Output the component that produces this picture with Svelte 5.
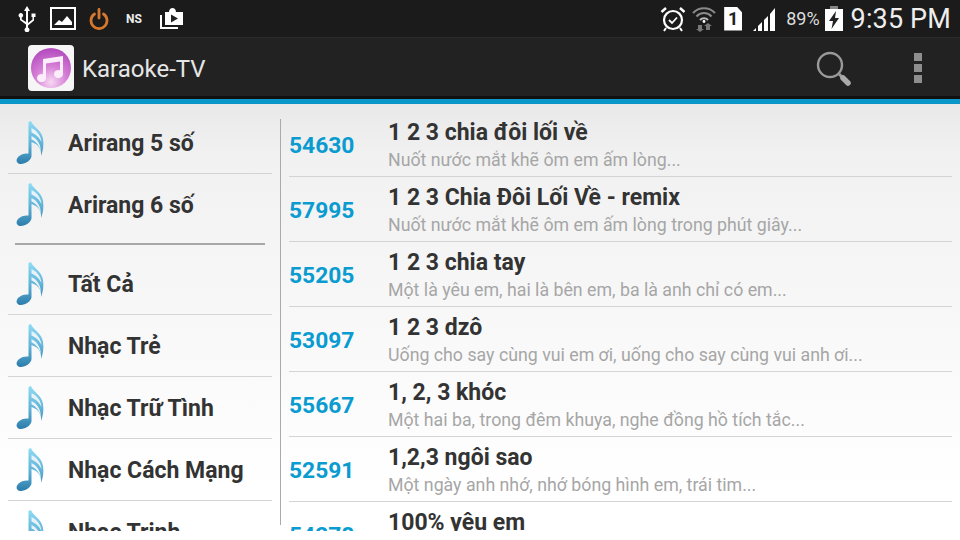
<script>
	const top = ['Arirang 5 số', 'Arirang 6 số'];
	const genres = ['Tất Cả', 'Nhạc Trẻ', 'Nhạc Trữ Tình', 'Nhạc Cách Mạng', 'Nhạc Trịnh'];
	const songs = [
		{ id: '54630', title: '1 2 3 chia đôi lối về', lyric: 'Nuốt nước mắt khẽ ôm em ấm lòng...' },
		{ id: '57995', title: '1 2 3 Chia Đôi Lối Về - remix', lyric: 'Nuốt nước mắt khẽ ôm em ấm lòng trong phút giây...' },
		{ id: '55205', title: '1 2 3 chia tay', lyric: 'Một là yêu em, hai là bên em, ba là anh chỉ có em...' },
		{ id: '53097', title: '1 2 3 dzô', lyric: 'Uống cho say cùng vui em ơi, uống cho say cùng vui anh ơi...' },
		{ id: '55667', title: '1, 2, 3 khóc', lyric: 'Một hai ba, trong đêm khuya, nghe đồng hồ tích tắc...' },
		{ id: '52591', title: '1,2,3 ngôi sao', lyric: 'Một ngày anh nhớ, nhớ bóng hình em, trái tim...' },
		{ id: '54278', title: '100% yêu em', lyric: '' }
	];
</script>

{#snippet note()}
	<svg class="note" viewBox="0 0 32 48" width="32" height="48">
		<path d="M14.500 3 L17 2 C19 8 28 11 29 20 C30 26 29 32 27 37 C27.500 31 26 26 17.500 23 L17.500 37 C17.500 41 11 45.500 6 45 C2.500 44.500 1.500 41 4 38 C7 35 11 34 14.500 34.500 Z" fill="url(#noteFill)" />
		<path d="M17.500 9 C22 11 27 16 27.500 23 C25 18 22 15.500 17.500 13.500 Z M17.500 17 C22 19 26.500 24 27 32 C25 26 22 22.500 17.500 20.500 Z" fill="#e9f3f7" />
	</svg>
{/snippet}

{#snippet genre(name)}
	<div class="genre">
		{@render note()}
		<span>{name}</span>
	</div>
{/snippet}

<svg class="defs" width="0" height="0">
	<defs>
		<linearGradient id="noteFill" x1="0" y1="0" x2="0" y2="1">
			<stop offset="0" stop-color="#8fdcf5" />
			<stop offset="0.55" stop-color="#5fb0d6" />
			<stop offset="1" stop-color="#2c7cab" />
		</linearGradient>
		<radialGradient id="appFill" cx="0.5" cy="0.85" r="0.8">
			<stop offset="0" stop-color="#f6d8f2" />
			<stop offset="0.5" stop-color="#d67fd6" />
			<stop offset="1" stop-color="#b54fc0" />
		</radialGradient>
	</defs>
</svg>

<div class="screen">
	<header class="status">
		<div class="status-left">
			<svg width="20" height="26" viewBox="0 0 20 26" fill="#fff">
				<path d="M10 0 L13 5 H11 V17 L15.500 13.500 V11 H14.500 V7.500 H18.500 V11 H17 V14.500 L11 19.500 V21.500 A2.500 2.500 0 1 1 9 21.500 V18.500 L3 14 V11.500 A2.300 2.300 0 1 1 4.700 11.500 V13.200 L9 16 V5 H7 Z" />
			</svg>
			<svg width="26" height="23" viewBox="0 0 26 23">
				<rect x="1" y="1" width="24" height="21" fill="none" stroke="#fff" stroke-width="2" />
				<path d="M4 18 L9 13 L12 15 L17 9 L22 15 V18 Z" fill="#fff" />
			</svg>
			<svg width="20" height="22" viewBox="0 0 20 22" fill="none" stroke="#d5782c" stroke-width="2.800">
				<path d="M5.500 6 A8 8 0 1 0 14.500 6" stroke-linecap="round" />
				<path d="M10 1.500 V10" stroke-linecap="round" />
			</svg>
			<span class="ns">NS</span>
			<svg width="24" height="24" viewBox="0 0 24 24">
				<path d="M1 8 V21 H18" fill="none" stroke="#fff" stroke-width="2" />
				<path d="M5 5 H9 C9 -0.500 16 -0.500 16 5 H23 V18 H5 Z" fill="#fff" />
				<path d="M11 7.500 L18 11.500 L11 15.500 Z" fill="#222" />
			</svg>
		</div>
		<div class="status-right">
			<svg width="26" height="26" viewBox="0 0 26 26" fill="none" stroke="#fff">
				<circle cx="13" cy="14" r="9" stroke-width="2.200" />
				<path d="M9 14 L12 17 L17 11.500" stroke-width="1.800" />
				<path d="M1.500 6 L6 2 M24.500 6 L20 2" stroke-width="2.400" />
				<path d="M6 22 L4 25 M20 22 L22 25" stroke-width="2" />
			</svg>
			<svg width="24" height="26" viewBox="0 0 24 26" fill="none" stroke="#8a8a8a" stroke-width="2">
				<path d="M1 7 A15 15 0 0 1 23 7 M4.500 10.500 A10 10 0 0 1 19.500 10.500" />
				<path d="M8 14 A5.500 5.500 0 0 1 16 14" stroke="#bbb" />
				<circle cx="12" cy="15.500" r="1.400" fill="#fff" stroke="none" />
				<path d="M6 19 H10 V23 H12 L8 26 L4 23 H6 Z M14 24 H18 V20 H20 L16 17 L12 20 H14 Z" fill="#777" stroke="none" />
			</svg>
			<div class="sim">1</div>
			<svg width="24" height="26" viewBox="0 0 24 26" fill="#fff">
				<path d="M1 25 L4 22 V25 Z" />
				<path d="M6 25 V20 L10 16 V25 Z" />
				<path d="M12 25 V14 L16 10 V25 Z" />
				<path d="M18 25 V8 L23 2 V25 Z" />
			</svg>
			<span class="pct">89%</span>
			<svg width="18" height="25" viewBox="0 0 18 25">
				<rect x="5" y="0" width="8" height="3" fill="#888" />
				<rect x="0" y="3" width="18" height="22" fill="#fff" />
				<path d="M11 5 L4 15 H8 L6.500 23 L14 12 H10 Z" fill="#222" />
			</svg>
			<span class="clock">9:35 PM</span>
		</div>
	</header>

	<div class="action">
		<div class="app-icon">
			<svg width="42" height="42" viewBox="0 0 42 42">
				<circle cx="21" cy="21" r="20" fill="url(#appFill)" />
				<path d="M13 12 L33 9 V27 A4.500 4 0 1 1 30 23.300 V14.500 L16 16.500 V31 A4.500 4 0 1 1 13 27.300 Z" fill="#fbeefa" />
			</svg>
		</div>
		<h1>Karaoke-TV</h1>
		<svg class="search" width="36" height="36" viewBox="0 0 36 36" fill="none" stroke="#9a9a9a">
			<circle cx="14" cy="14" r="12" stroke-width="2.400" />
			<path d="M23 23 L27 27" stroke-width="3" />
			<path d="M27 27 L32 32" stroke="#aaa" stroke-width="5.500" stroke-linecap="round" />
		</svg>
		<div class="overflow"><i></i><i></i><i></i></div>
	</div>
	<div class="accent"></div>

	<main class="body">
		<aside class="genres">
			<div class="group">
				{#each top as name}
					{@render genre(name)}
				{/each}
			</div>
			<div class="rule"></div>
			{#each genres as name}
				{@render genre(name)}
			{/each}
		</aside>
		<section class="songs">
			{#each songs as song}
				<div class="song">
					<b class="num">{song.id}</b>
					<div class="text">
						<div class="title">{song.title}</div>
						<div class="lyric">{song.lyric}</div>
					</div>
				</div>
			{/each}
		</section>
	</main>
</div>

<style>
	:global(body) {
		background: #fff;
	}

	.defs {
		position: absolute;
	}

	.screen {
		width: 960px;
		height: 540px;
		overflow: hidden;
		display: flex;
		flex-direction: column;
		font-family: Roboto, sans-serif;
	}

	.status {
		height: 38px;
		flex-shrink: 0;
		box-sizing: border-box;
		background: #1b1b1b;
		border-bottom: 1px solid #2c2c2c;
		display: flex;
		justify-content: space-between;
		align-items: center;
		padding: 0 9px 0 17px;
		color: #fff;
	}

	.status-left,
	.status-right {
		display: flex;
		align-items: center;
	}

	.status-left {
		gap: 13px;
	}

	.ns {
		font-size: 12px;
		font-weight: 700;
		color: #eee;
		width: 21px;
		margin-left: 4px;
	}

	.status-right {
		gap: 6px;
	}

	.sim {
		width: 18px;
		height: 24px;
		background: #fff;
		color: #222;
		font-size: 18px;
		font-weight: 700;
		line-height: 24px;
		text-align: center;
		clip-path: polygon(0 0, 70% 0, 100% 25%, 100% 100%, 0 100%);
		margin: 0 4px 0 2px;
	}

	.pct {
		font-size: 18px;
		color: #ddd;
		margin-left: 4px;
		margin-right: -1px;
	}

	.clock {
		font-size: 27px;
		color: #eee;
		margin-left: 2px;
		letter-spacing: 0.15px;
	}

	.action {
		height: 58px;
		flex-shrink: 0;
		box-sizing: border-box;
		background: #222;
		display: flex;
		align-items: center;
		padding: 2px 38px 0 28px;
	}

	.app-icon {
		width: 46px;
		height: 46px;
		background: #f6f6f6;
		border-radius: 4px;
		display: flex;
		align-items: center;
		justify-content: center;
	}

	h1 {
		margin: 2px 0 0 8px;
		font-size: 24px;
		font-weight: 400;
		color: #e6e6e6;
		flex: 1;
	}

	.search {
		margin-right: 62px;
		margin-top: 1px;
	}

	.overflow {
		display: flex;
		flex-direction: column;
		gap: 3px;
	}

	.overflow i {
		display: block;
		width: 8px;
		height: 8px;
		background: #8e8e8e;
	}

	.accent {
		height: 8px;
		flex-shrink: 0;
		box-sizing: border-box;
		background: #0a96c8;
		border-top: 3px solid #111;
	}

	.body {
		height: 427px;
		flex-shrink: 0;
		overflow: hidden;
		background: linear-gradient(#e9e9e9, #f1f1f1 12%, #fff 90%);
		display: flex;
		padding: 8px 8px 0;
		box-sizing: border-box;
	}

	.genres {
		width: 264px;
		flex-shrink: 0;
	}

	.genre {
		height: 61px;
		border-bottom: 1px solid #d4d4d4;
		display: flex;
		align-items: center;
		padding-left: 6px;
		color: #333;
		font-size: 23px;
		font-weight: 700;
	}

	.group .genre:last-child {
		border-bottom-color: transparent;
	}

	.genre span {
		margin-left: 22px;
		margin-top: 2px;
	}

	.genres .rule {
		height: 2px;
		margin: 7px 7px 8px 7px;
		background: #a8a8a8;
	}

	.note {
		flex-shrink: 0;
	}

	.songs {
		flex: 1;
		margin: 7px 0 6px 8px;
		border-left: 1px solid #aaa;
		padding-left: 8px;
	}

	.song {
		height: 57px;
		padding-top: 7px;
		border-bottom: 1px solid #d4d4d4;
		display: flex;
		align-items: flex-start;
	}

	.song:first-child {
		margin-top: -7px;
	}

	.num {
		width: 99px;
		flex-shrink: 0;
		font-size: 22.8px;
		font-weight: 700;
		color: #0a9bd0;
		margin-top: 13px;
	}

	.title {
		font-size: 23px;
		font-weight: 700;
		color: #333;
		line-height: 27px;
	}

	.lyric {
		font-size: 17.75px;
		color: #a6a6a6;
		line-height: 24px;
		height: 24px;
		margin-top: 2px;
	}
</style>
